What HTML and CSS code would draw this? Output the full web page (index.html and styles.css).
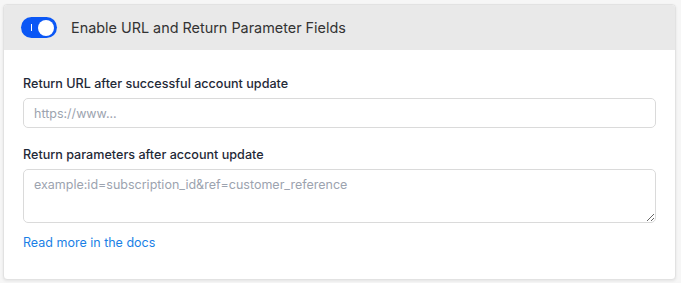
FILE: index.html
```html
<!DOCTYPE html>
<html lang="en">
<head>
    <meta charset="UTF-8">
    <title>Return URL Settings</title>
    <link rel="stylesheet" href="styles.css">
</head>
<body>
    <div class="card">
        <div class="card-header">
            <label class="toggle">
                <input type="checkbox" checked>
                <span class="track"><span class="mark"></span><span class="knob"></span></span>
            </label>
            <span class="header-title">Enable URL and Return Parameter Fields</span>
        </div>
        <div class="card-body">
            <div class="field">
                <label for="return-url">Return URL after successful account update</label>
                <input type="text" id="return-url" placeholder="https://www...">
            </div>
            <div class="field">
                <label for="return-params">Return parameters after account update</label>
                <textarea id="return-params" placeholder="example:id=subscription_id&amp;ref=customer_reference"></textarea>
            </div>
            <a class="docs-link" href="#">Read more in the docs</a>
        </div>
    </div>
</body>
</html>
```

FILE: styles.css
```css
body {
    font-family: Inter, "Noto Sans", Arial, sans-serif;
    background-color: #F6F6F6;
    margin: 0;
    padding: 4px 5px 3px 3px;
}
.card {
    background: white;
    border: 1px solid #E2E2E2;
    border-radius: 4px;
    box-shadow: 0 1px 3px rgba(0,0,0,0.08);
    overflow: hidden;
    height: 276px;
    box-sizing: border-box;
}
.card-header {
    background-color: #E9E9E9;
    height: 45px;
    display: flex;
    align-items: center;
    padding-left: 17px;
    gap: 14px;
}
.header-title {
    font-size: 14.4px;
    color: #333;
}
.toggle input {
    display: none;
}
.toggle .track {
    display: block;
    position: relative;
    width: 36px;
    height: 21px;
    border-radius: 11px;
    background-color: #0B57F5;
}
.toggle .mark {
    position: absolute;
    left: 10px;
    top: 7px;
    width: 1px;
    height: 7px;
    background: white;
}
.toggle .knob {
    position: absolute;
    right: 3px;
    top: 2.5px;
    width: 16px;
    height: 16px;
    border-radius: 50%;
    background: white;
}
.card-body {
    padding: 26px 19px 0 19px;
}
.field {
    margin-bottom: 19px;
}
.field label {
    display: block;
    font-size: 12.6px;
    font-weight: 500;
    color: #1F2937;
    line-height: 16px;
    margin-bottom: 6px;
}
input, textarea {
    width: 100%;
    box-sizing: border-box;
    border: 1px solid #DADADA;
    border-radius: 5px;
    font-family: inherit;
    font-size: 12.5px;
    color: #333;
    padding: 0 10px;
    outline: none;
}
input {
    height: 30px;
}
textarea {
    height: 54px;
    padding-top: 7px;
    resize: vertical;
    display: block;
}
input::placeholder, textarea::placeholder {
    color: #9CA3AF;
}
.field:nth-child(2) {
    margin-bottom: 8px;
}
.docs-link {
    font-size: 12.5px;
    line-height: 16px;
    color: #1A7FE6;
    text-decoration: none;
}
```
